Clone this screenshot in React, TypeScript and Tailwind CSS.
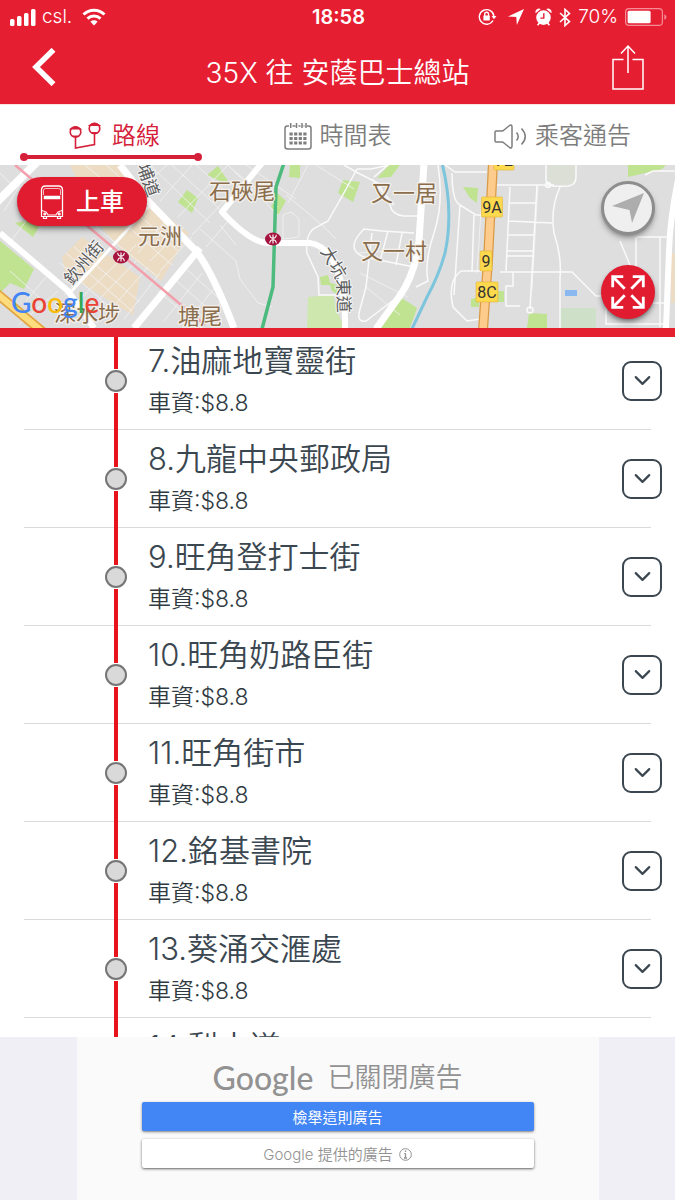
import { ChevronDown } from "lucide-react"

const stops = [
  { id: 7, name: "油麻地寶靈街", fare: "$8.8" },
  { id: 8, name: "九龍中央郵政局", fare: "$8.8" },
  { id: 9, name: "旺角登打士街", fare: "$8.8" },
  { id: 10, name: "旺角奶路臣街", fare: "$8.8" },
  { id: 11, name: "旺角街市", fare: "$8.8" },
  { id: 12, name: "銘基書院", fare: "$8.8" },
  { id: 13, name: "葵涌交滙處", fare: "$8.8" },
  { id: 14, name: "梨木道", fare: "$8.8" },
]

function StatusBar() {
  return (
    <div className="grid grid-cols-3 items-center pl-2.5 pr-2 h-[34px] text-[19px]">
      <div className="flex items-center gap-1.5">
        <svg width="26" height="17" viewBox="0 0 26 17" fill="currentColor" aria-hidden="true">
          <rect x="0" y="10" width="4.5" height="7" rx="1.5" />
          <rect x="7" y="7" width="4.5" height="10" rx="1.5" />
          <rect x="14" y="4" width="4.5" height="13" rx="1.5" />
          <rect x="21" y="0" width="4.5" height="17" rx="1.5" />
        </svg>
        <span className="font-light">csl.</span>
        <svg className="ml-1" width="24" height="18" viewBox="0 0 24 18" fill="none" stroke="currentColor" strokeWidth="3" aria-hidden="true">
          <path d="M1.5 6.5a15 15 0 0 1 21 0" />
          <path d="M5.5 10.6a9.5 9.5 0 0 1 13 0" />
          <path d="M12 17.5l-3.6-3.7a5.2 5.2 0 0 1 7.2 0z" fill="currentColor" stroke="none" />
        </svg>
      </div>
      <span className="text-center text-xl font-semibold">18:58</span>
      <div className="flex items-center justify-end gap-[7px]">
        <svg width="19" height="18" viewBox="0 0 19 18" fill="none" stroke="currentColor" strokeWidth="1.4" aria-hidden="true">
          <path d="M15 12.5a7.3 7.3 0 1 1 .9-4.2" />
          <path d="M13.6 8h4.8L16 11.2z" fill="currentColor" stroke="none" />
          <rect x="5.4" y="7.6" width="6.4" height="5" rx="0.6" fill="currentColor" stroke="none" />
          <path d="M6.7 8V6.2a1.9 1.9 0 0 1 3.8 0V8" />
        </svg>
        <svg className="ml-1" width="16" height="16" viewBox="0 0 17 17" fill="currentColor" aria-hidden="true">
          <path d="M17 0L9.4 17 8.8 8.6 0 8z" />
        </svg>
        <svg className="ml-1" width="17" height="18" viewBox="0 0 17 18" fill="currentColor" aria-hidden="true">
          <path d="M.6 5.2A3.6 3.6 0 0 1 5.8 1zM16.4 5.2A3.6 3.6 0 0 0 11.2 1z" />
          <circle cx="8.5" cy="9.6" r="7.3" />
          <path d="M2.6 17.2l2-2.4M14.4 17.2l-2-2.4" stroke="currentColor" strokeWidth="1.6" />
          <path d="M8.8 5.2v4.9H5.4" fill="none" stroke="#e61e32" strokeWidth="1.4" />
        </svg>
        <svg width="12" height="19" viewBox="0 0 12 19" fill="none" stroke="currentColor" strokeWidth="1.6" aria-hidden="true">
          <path d="M1 5l9.5 8.6L6 17.6V1.4l4.5 4L1 14" />
        </svg>
        <span className="font-light">70%</span>
        <svg width="42" height="18" viewBox="0 0 42 18" fill="none" aria-hidden="true">
          <rect x="0.6" y="0.6" width="36.8" height="16.8" rx="3.5" stroke="#f58c96" strokeWidth="1.2" />
          <rect x="2.6" y="2.8" width="23" height="12.4" rx="1.5" fill="#fff" />
          <path d="M39.4 6.2c2.6 1 2.6 4.6 0 5.6z" fill="#f58c96" />
        </svg>
      </div>
    </div>
  )
}

function Header() {
  return (
    <header className="bg-[#e61e32] text-white">
      <StatusBar />
      <div className="flex h-[70px] items-center justify-between pb-1 pl-8 pr-[30px]">
        <button type="button" aria-label="返回" className="w-8">
          <svg width="24" height="38" viewBox="0 0 24 38" fill="none" stroke="currentColor" strokeWidth="5.5">
            <path d="M21.5 1.8L4 19l17.500 17.200" />
          </svg>
        </button>
        <h1 className="pt-3 text-[28px] font-[350]">35X 往 安蔭巴士總站</h1>
        <button type="button" aria-label="分享">
          <svg width="34" height="46" viewBox="0 0 34 46" fill="none" stroke="currentColor" strokeWidth="1.500">
            <path d="M12.5 15.500H2v29.500h30V15.500H21.500M17 29V2.500M10 9.500L17 2l7 7.500" />
          </svg>
        </button>
      </div>
    </header>
  )
}

function Tabs() {
  return (
    <nav className="grid h-[61px] grid-cols-3 border-t border-[#fbe3de] bg-white text-2xl font-[350] text-[#7d7d7d]">
      <a href="#route" className="flex flex-col items-center text-[#d5203a]" aria-current="page">
        <span className="flex h-12 items-center gap-2.5 pt-3.5 pl-1">
          <svg width="33" height="28" viewBox="0 0 33 28" fill="none" stroke="currentColor" strokeWidth="1.6" aria-hidden="true">
            <circle cx="6.500" cy="10" r="5.300" />
            <path d="M2 6.800Q6.500 3.500 11 6.800zM3 14.200h7" />
            <circle cx="25.500" cy="6.500" r="5.300" />
            <path d="M21 3.300Q25.500 0 30 3.300zM22 10.700h7" />
            <path d="M6.500 15v11l19-3.500V12" />
          </svg>
          路線
        </span>
        <svg className="mr-1" width="182" height="8" viewBox="0 0 182 8" fill="currentColor" aria-hidden="true">
          <circle cx="4" cy="4" r="4" />
          <rect x="3" y="2" width="176" height="4" />
          <circle cx="178" cy="4" r="4" />
        </svg>
      </a>
      <a href="#timetable" className="flex h-12 items-center justify-center gap-2 pt-3.5">
        <svg width="28" height="27" viewBox="0 0 28 27" fill="none" stroke="currentColor" strokeWidth="1.5" aria-hidden="true">
          <path d="M5 3H3.500Q1 3 1 5.500V23.500Q1 26 3.500 26H24.500Q27 26 27 23.500V5.500Q27 3 24.500 3H23M8.500 3h3M14.500 3h2M19.500 3h1" />
          <path d="M6.700 0v5M12.500 0v5M18 0v5M22 0v5" />
          <path d="M5.500 11h17M5.500 15.500h17M5.500 20h17" strokeWidth="3" strokeDasharray="3.200 1.400" />
        </svg>
        時間表
      </a>
      <a href="#notice" className="flex h-12 items-center justify-center gap-2 pt-3.5">
        <svg width="33" height="25" viewBox="0 0 33 25" fill="none" stroke="currentColor" strokeWidth="1.5" aria-hidden="true">
          <path d="M1 8Q1 7 2 7H8Q9 7 10 6L15.500 1.500Q18 0 18 3V22Q18 25 15.500 23.500L10 19Q9 18 8 18H2Q1 18 1 17Z" />
          <path d="M22.500 8.500q3.500 4 0 8M27.500 4.500q7.500 8 0 16" />
        </svg>
        乘客通告
      </a>
    </nav>
  )
}

function Station({ x, y }: { x: number; y: number }) {
  return (
    <g transform={`translate(${x} ${y})`}>
      <ellipse rx="8" ry="6.500" fill="#a5143f" />
      <path d="M0-4.500v9M-3.300-4.300Q-3-.8 0-.8T3.300-4.300M-3.300 4.300Q-3 .8 0 .8M3.300 4.300Q3 .8 0 .8M0-.8Q3-.8 3.300-4.300" fill="none" stroke="#fff" strokeWidth="1.100" />
    </g>
  )
}

function Shield({ x, y, width, label }: { x: number; y: number; width: number; label: string }) {
  return (
    <g>
      <rect x={x - width / 2} y={y - 10} width={width} height="20" rx="1" fill="#fdd94e" stroke="#e2b43a" strokeWidth="0.600" />
      <text x={x} y={y + 6} textAnchor="middle" fontSize="16" fill="#333">{label}</text>
    </g>
  )
}

function MapDrawing() {
  return (
    <svg
      className="absolute inset-0 h-full w-full font-[Roboto,'Noto_Sans_CJK_TC',sans-serif]"
      viewBox="0 0 675 163"
      preserveAspectRatio="xMidYMid slice"
      aria-label="地圖"
    >
      <rect width="675" height="163" fill="#dedede" />

      {/* parks and built-up blocks */}
      <g fill="#eddcc4">
        <path d="M70 0h53l22 32 20 18 24 18-28 48-40-32-22-24z" />
        <path d="M62 92l20-20 58 40-7 38-20-12-48-30z" />
        <path d="M671 88h4v50h-4z" />
      </g>
      <g fill="#bfe391">
        <path d="M0 76l34 28-10 20-14-6-10 10z" />
        <path d="M15 58l20-4 4 8-6 10z" />
        <path d="M187 25l11 8-6 15-14-11z" />
        <path d="M207 10l11-9 12 18-8-2z" />
        <path d="M290 0h10v13l-11-1z" />
        <path d="M277 28l9 8-8 14-7-8z" />
        <path d="M343 15l17 2-7 20-15-9z" />
        <path d="M377 13l12-13h11l-9 12z" />
        <path d="M320 112l8-2 2 8 8 2v10l-6-4-2-6h-9z" />
        <path d="M463 22l15 1-1 15-7-5z" />
        <path d="M628 0h38l-4 4-34 8z" />
        <path d="M400 132l17 11-7 20h-29z" />
        <path d="M471 134l8-2v10h-8zM497 126h7v11h-7zM529 148l18 1v14h-20z" />
      </g>
      <path d="M308 132l25-2 5 18 6 15h-37z" fill="#cde7ae" />
      <path d="M560 143h36v20h-36z" fill="#cfe0c8" />
      <path d="M548 0h28v18l-8 3-20-4z" fill="#dcdfd6" />
      <path d="M565 125h12v6h-12z" fill="#8ab9f2" />

      {/* side streets */}
      <g fill="none" stroke="#f1f1f1" strokeWidth="0.900">
        <path d="M66 88l66 58M74 82l66 55M60 98l56 50M96 62l62 50M108 44l64 56M118 30l60 56M132 28l52 44M85 0l62 52M106 0l50 44" />
        <path d="M64 130l50-50M78 136l58-56M92 142l44-46M106 150l42-48M124 154l36-46M150 96l34-34M160 106l32-34M138 88l28-32" />
        <path d="M150 0l60 58M172 0l52 48M196 0l36 32M228 0l50 50M145 20l22-20M160 36l32-36M178 52l50-52M192 70l36-38M206 82l22-26" />
        <path d="M158 126l44 37M172 112l50 44M184 102l40 36M164 156l38-48M182 163l34-42M200 163l24-30M0 8l12 12M20 20L4 46M26 56L8 80" />
        <path d="M200 64l36 32 4 18 18 24 14 4M220 60l16 20M10 106l40 36M18 160l40-34M46 112l-20 24" />
        <path d="M232 4l46 38M246 0l50 34M308 0l-20 38M283 50l0 24 16-2V54l-8-7zM286 30l22 18 14 12 14 14M316 0l38 24" />
        <path d="M481 46l-4 62M538 20l-6 105M366 122l34 28M360 108l48 24M358 88l30-2" />
      </g>
      <g fill="none" stroke="#fafafa" strokeWidth="1.500">
        <path d="M357 4l-12 22-17 30-15 8q-8 8-6 24l11 24 1 18h22" />
        <path d="M344 0l14 8 20 10 12 22q2 10 14 11h14M357 4h14l18-4M372 14l22 26M388 0l-14 12" />
        <path d="M414 68l-32-2-18-2q-20 20 0 28l50 10M372 68l-6 54-6 22q-4 14 6 12l34-26M388 66l-8 30M402 68l-6 32" />
        <path d="M438 0q6 38-4 68t-6 48l-12 6M445 0l10 7h32M452 8q0 28 8 32l16 10h10M460 40l-6 90M474 50l-2 56" />
        <path d="M492 20h54q10 2 22 1 8-1 8-9V0M546 0v14q0 6 8 6M560 22q-10 22-6 46 8 24 6 45v50" />
        <path d="M510 22l-4 84M537 20l-7 124M510 38h26M508 56l44 2M508 70h26M506 86h28M506 91h28" />
        <path d="M485 106h-24q-14 10-8 36l14 14 20-3M500 107h72l24 24h10M513 107v14h-7v20h14" />
        <path d="M637 72h32M636 72v40M660 72v90M606 120v40M606 159h60M645 10l8-4h22M620 76l10 24M606 138h60" />
        <circle cx="530" cy="145" r="3" />
        <circle cx="548" cy="20" r="2.500" />
      </g>

      {/* main roads */}
      <g fill="none" stroke="#fff" strokeLinejoin="round">
        <path d="M-4 38L38-4" strokeWidth="8" />
        <path d="M0 68l68 58 26 37" strokeWidth="6" />
        <path d="M68 130l80-88" strokeWidth="3" />
        <path d="M134 163l66-80" strokeWidth="7" />
        <path d="M120 0l28 36 48 50q16 20 38 77" strokeWidth="7" />
        <path d="M262-2l-40 49q28 30 45 31h43q16 2 26 24 10 24 9 61" strokeWidth="6" />
        <path d="M424-2l-5 78q-4 34-20 56l-23 32" strokeWidth="7" />
        <path d="M679 10q-9 42-10 76l-3 77" strokeWidth="6" />
      </g>

      <path d="M442-2q12 48 3 90-6 22-18 44l-16 34" fill="none" stroke="#7cc5dd" strokeWidth="3" />
      <path d="M15 0l190 160" stroke="#f29fab" strokeWidth="2.500" />
      <path d="M284-2l-8 24-3 100-11 42" fill="none" stroke="#4dba7e" strokeWidth="3.500" />
      <path d="M493-2l-5 97-5 70" fill="none" stroke="#d99a45" strokeWidth="10" />
      <path d="M493-2l-5 97-5 70" fill="none" stroke="#fdcb8b" strokeWidth="7.500" />
      <path d="M-4 128l48 40" stroke="#e3a544" strokeWidth="10" />
      <path d="M-4 128l48 40" stroke="#fcdc7c" strokeWidth="6.500" />

      <Station x={121} y={92} />
      <Station x={273} y={74} />
      <Shield x={504} y={-5} width={20} label="72" />
      <Shield x={492} y={42} width={21} label="9A" />
      <Shield x={486} y={96} width={12} label="9" />
      <Shield x={487} y={127} width={22} label="8C" />

      <g fill="#8a6d4c" stroke="#f4f1ec" strokeWidth="2.500" strokeLinejoin="round" paintOrder="stroke" fontSize="22">
        <text x="209" y="34">石硤尾</text>
        <text x="371" y="36">又一居</text>
        <text x="361" y="94">又一村</text>
        <text x="138" y="79">元洲</text>
        <text x="54" y="156">深水埗</text>
        <text x="178" y="159">塘尾</text>
      </g>
      <g fill="#5c5c5c" stroke="#f7f7f7" strokeWidth="2" strokeLinejoin="round" paintOrder="stroke" fontSize="17">
        <text x="0" y="0" transform="translate(72 121) rotate(-50)">欽州街</text>
        <text x="0" y="0" transform="translate(137 1) rotate(70)">埔道</text>
        <text x="0" y="0" transform="translate(320 86) rotate(60)">大坑</text>
        <text x="0" y="0" transform="translate(337 114) rotate(88)">東道</text>
      </g>
    </svg>
  )
}

function RouteMap() {
  return (
    <section className="relative flex h-[172px] items-start justify-between overflow-hidden border-b-9 border-[#e4202f] pl-[17px] pr-5 pt-3">
      <MapDrawing />
      <button
        type="button"
        className="relative flex h-[49px] w-[130px] items-center justify-center gap-3 rounded-full bg-[#e11b30] pt-px text-2xl font-medium text-white shadow-md shadow-black/40"
      >
        <svg width="24" height="34" viewBox="0 0 24 34" fill="none" stroke="currentColor" strokeWidth="1.300" aria-hidden="true">
          <path d="M1.500 28V5Q1.500 1 5.500 1h13q4 0 4 4v23" />
          <path d="M3.500 10V5.500Q3.500 3.500 5.500 3.500h13q2 0 2 2V10" strokeWidth="0.700" />
          <path d="M4 11h16v3H4z" fill="currentColor" strokeWidth="0.500" />
          <path d="M2 25.500q3 1 4 1.500 2 2.500 2 3h8q0-.5 2-3 1-.5 4-1.500M1.500 27v4.500h21V27" strokeWidth="1.200" />
          <path d="M3.500 32v1.500h3V32M17.500 32v1.500h3V32" strokeWidth="1.200" />
          <circle cx="4.800" cy="29" r="0.900" />
          <circle cx="19.200" cy="29" r="0.900" />
        </svg>
        上車
      </button>
      <div className="relative flex flex-col gap-[30px] pt-1">
        <button type="button" aria-label="目前位置" className="flex size-[54px] items-center justify-center rounded-full border-3 border-[#8d8d8d] bg-[#efefef] shadow-md shadow-black/30">
          <svg className="shrink-0" width="32" height="30" viewBox="0 0 32 30" fill="#adadad">
            <path d="M32 0L20 30 17.500 17 0 13z" />
          </svg>
        </button>
        <button type="button" aria-label="放大地圖" className="flex size-[54px] items-center justify-center rounded-full bg-[#e11b30] text-white shadow-md shadow-black/40">
          <svg width="34" height="34" viewBox="0 0 36 36" fill="none" stroke="currentColor" strokeWidth="3">
            <path d="M1.800 13V1.800H13M2.500 2.500l12 12M23 1.800h11.200V13M33.500 2.500l-12 12M1.800 23v11.200H13M2.500 33.500l12-12M34.200 23v11.200H23M33.500 33.500l-12-12" />
          </svg>
        </button>
      </div>
      <div className="absolute bottom-2 left-[11px] font-[Lato,sans-serif] text-[28px] leading-9 font-medium text-[#4285f4]" aria-label="Google">
        G<span className="text-[#ea4335]">o</span>
        <span className="text-[#fbbc05]">o</span>g<span className="text-[#34a853]">l</span>
        <span className="text-[#ea4335]">e</span>
      </div>
    </section>
  )
}

function StopRow({ id, name, fare }: { id: number; name: string; fare: string }) {
  return (
    <li className="mx-6 flex h-[98px] items-center border-b border-[#d8dadb]">
      <div className="-mb-px ml-20 flex w-6 shrink-0 flex-col items-center self-stretch">
        <div className="w-1 flex-1 bg-[#e8141c]" />
        <div className="my-px size-[22px] rounded-full border-2 border-[#757575] bg-[#d9d9d9]" />
        <div className="w-1 flex-1 bg-[#e8141c]" />
      </div>
      <div className="ml-5 flex-1 pt-[3px] font-[350] leading-[42px] text-[#3b4750]">
        <h2 className="text-[31px]">{id}.{name}</h2>
        <p className="text-[23px] text-[#2f3a42]">車資:{fare}</p>
      </div>
      <button
        type="button"
        aria-label={`展開 ${name}`}
        className="-mr-[11px] flex size-10 items-center justify-center rounded-[9px] border-2 border-[#3b4750] text-[#3b4750]"
      >
        <ChevronDown size={27} strokeWidth={1.9} />
      </button>
    </li>
  )
}

function AdPanel() {
  return (
    <footer className="bg-[#efeff5]">
      <div className="mx-auto flex h-[163px] max-w-[522px] flex-col gap-2 bg-[#fafafa] px-[65px] pt-5">
        <div className="flex h-[37px] items-center justify-center gap-3.5 pt-1 text-[#929292]">
          <span className="font-[Lato,sans-serif] text-[32px] leading-9 font-medium">Google</span>
          <span className="text-[27px] leading-9 font-[350]">已關閉廣告</span>
        </div>
        <button type="button" className="h-[29px] rounded-xs bg-[#4285f4] pt-0.5 text-[15px] leading-6 text-white shadow-sm shadow-black/40">
          檢舉這則廣告
        </button>
        <button
          type="button"
          className="flex h-[29px] items-center justify-center gap-1.5 rounded-xs bg-white pt-0.5 text-[15px] leading-6 font-[350] text-[#929292] shadow-sm shadow-black/50"
        >
          Google 提供的廣告
          <svg width="13" height="13" viewBox="0 0 13 13" fill="none" stroke="currentColor" aria-hidden="true">
            <circle cx="6.500" cy="6.500" r="5.800" />
            <path d="M6.500 2.500v1.600M6.500 5.200V10M5.300 5.600h1.200M5 10h3" strokeWidth="1.300" />
          </svg>
        </button>
      </div>
    </footer>
  )
}

export default function App() {
  return (
    <div className="flex h-screen flex-col bg-white font-[Inter,'Noto_Sans_CJK_TC',sans-serif]">
      <Header />
      <Tabs />
      <RouteMap />
      <main className="min-h-0 flex-1 overflow-hidden">
        <ul className="-mt-[5px]">
          {stops.map((stop) => (
            <StopRow key={stop.id} {...stop} />
          ))}
        </ul>
      </main>
      <AdPanel />
    </div>
  )
}
